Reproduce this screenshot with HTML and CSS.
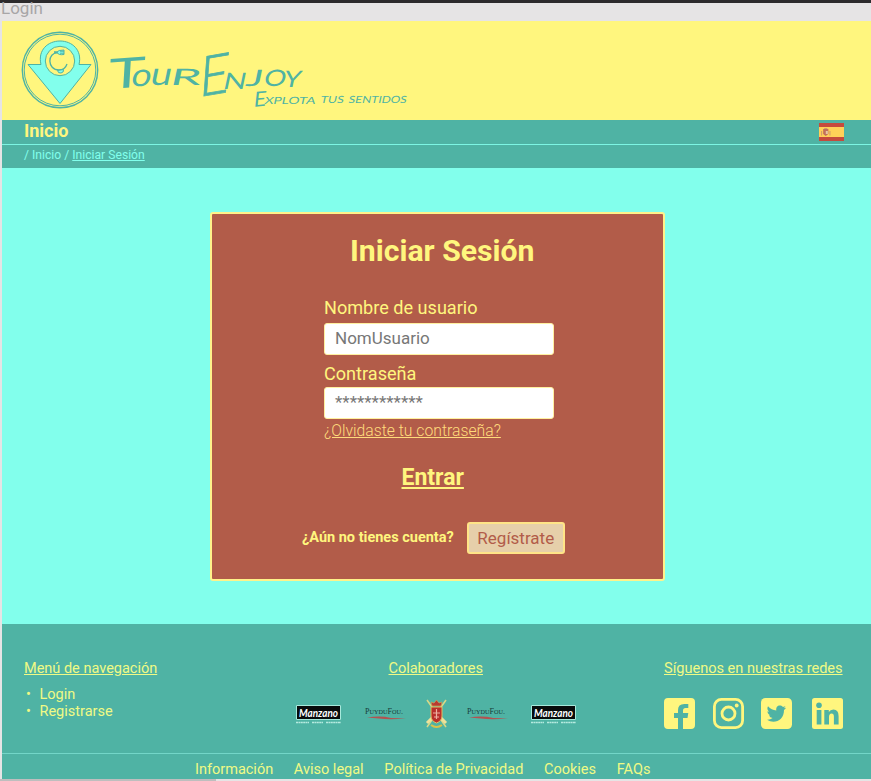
FILE: index.html
```html
<!DOCTYPE html>
<html lang="es">
<head>
<meta charset="utf-8">
<title>TourEnjoy - Iniciar Sesión</title>
<link rel="stylesheet" href="styles.css">
</head>
<body>
<div class="frame-label"><span>Login</span></div>
<div class="page">
  <header class="brand">
    <svg class="logo" viewBox="0 0 78 78" aria-hidden="true">
      <circle cx="39" cy="39" r="37.700" fill="none" stroke="#4fb3a4" stroke-width="1.4"/>
      <circle cx="39" cy="39" r="35.800" fill="none" stroke="#4fb3a4" stroke-width="1"/>
      <path d="M7 33.500H20C16.500 19 27 10 39 10S61.500 19 58 33.500H70L39 72.500Z" fill="#82ffec" stroke="#4fb3a4"/>
      <circle cx="39" cy="30" r="14.700" fill="#fff67e" stroke="#4fb3a4"/>
      <path d="M37 22C26 21 26 39 38 39C42 39 45 36 46 33M37 21H33" fill="none" stroke="#4fb3a4" stroke-width="1.300"/>
      <path d="M36 21Q37 19 43 19V23.500Q37 24.500 36 21ZM39 20.200h4M39 22.200h4M36.500 39.500Q37 42.500 40 42T42.500 38.500Z" fill="#82ffec" stroke="#4fb3a4"/>
    </svg>
    <svg class="wordmark" viewBox="108 40 302 76">
      <g fill="#4fb3a4" stroke="#4fb3a4">
        <text class="hand name" transform="skewX(-12)"><tspan class="cap-t" x="127" y="89" rotate="-6" textLength="36" lengthAdjust="spacingAndGlyphs">T</tspan><tspan class="low" x="148" y="86" textLength="20" lengthAdjust="spacingAndGlyphs">o</tspan><tspan class="low" x="167" y="85" textLength="21" lengthAdjust="spacingAndGlyphs">u</tspan><tspan class="small" x="187" y="85" textLength="31" lengthAdjust="spacingAndGlyphs">r</tspan><tspan class="cap-e" x="219" y="97" rotate="-9" textLength="29" lengthAdjust="spacingAndGlyphs">E</tspan><tspan class="small" x="241" y="89" textLength="23" lengthAdjust="spacingAndGlyphs">n</tspan><tspan class="small" x="263" y="86" textLength="17" lengthAdjust="spacingAndGlyphs">j</tspan><tspan class="small" x="281" y="86" textLength="22" lengthAdjust="spacingAndGlyphs">o</tspan><tspan class="small" x="301" y="87" textLength="17" lengthAdjust="spacingAndGlyphs">y</tspan></text>
        <text class="hand tag" transform="skewX(-12)"><tspan class="tag-e" x="276" y="107" rotate="-6">E</tspan><tspan x="286" y="104" textLength="51" lengthAdjust="spacingAndGlyphs">xplota</tspan> <tspan x="342" y="103" textLength="23" lengthAdjust="spacingAndGlyphs">tus</tspan> <tspan x="370" y="103" textLength="58" lengthAdjust="spacingAndGlyphs">sentidos</tspan></text>
      </g>
    </svg>
  </header>
  <nav class="main-nav">
    <a class="home">Inicio</a>
    <svg class="flag" viewBox="0 0 24 18" preserveAspectRatio="none" aria-hidden="true">
      <path fill="#c54b3d" d="M0 0h24v18H0z"/><path fill="#ffd158" d="M0 4h24v10H0z"/>
      <path fill="#c2705a" d="M4 6h5v5l-2.500 2L4 11z"/><path d="M2.500 8v4.500M10.500 8v4.500M5 5.500h3" stroke="#d09a6c"/><path fill="#e8c7a1" d="M6.500 8h2v3h-2z"/>
    </svg>
  </nav>
  <div class="crumbs">/ Inicio / <a>Iniciar Sesión</a></div>
  <main>
    <section class="card">
      <h1>Iniciar Sesión</h1>
      <form>
        <label for="user">Nombre de usuario</label>
        <div class="field" id="user">NomUsuario</div>
        <label class="second" for="pass">Contraseña</label>
        <div class="field" id="pass">************</div>
        <a class="forgot">¿Olvidaste tu contraseña?</a>
      </form>
      <a class="enter">Entrar</a>
      <div class="signup"><b>¿Aún no tienes cuenta?</b><a class="button">Regístrate</a></div>
    </section>
  </main>
  <footer>
    <div class="columns">
      <section class="menu">
        <h2>Menú de navegación</h2>
        <ul><li>Login</li><li>Registrarse</li></ul>
      </section>
      <section class="partners">
        <h2>Colaboradores</h2>
        <svg class="partner-row" viewBox="296 696 282 34">
          <defs>
            <g id="manzano"><path fill="#080c0c" stroke="#a6eadc" stroke-width="1" d="M.5.500h44v14H.5z"/><text class="manzano-text" x="3" y="12" textLength="39" lengthAdjust="spacingAndGlyphs">Manzano</text><path d="M0 17.500h13M16 17.500h11M30 17.500h15" stroke="#b5eadf" stroke-width="1.300" stroke-dasharray="2 .4"/></g>
            <g id="puy"><text class="puy-text" x="0" y="9" textLength="38" lengthAdjust="spacingAndGlyphs">P<tspan class="puy-small">UYDU</tspan>F<tspan class="puy-small">OU</tspan>.</text><path d="M2 12.500Q16 10.500 26 13L41 13.500Q24 15 14 13.500Z" fill="#b35250"/></g>
          </defs>
          <use href="#manzano" x="296" y="705"/><use href="#puy" x="365" y="705"/>
          <g transform="translate(426 699)"><path d="M1 1L20 28M20 1L1 28" stroke="#d8d887" stroke-width="1.600"/><path d="M1 24l5-5M20 24l-5-5" stroke="#efe29a" stroke-width="3"/><path d="M5 8h11v9q0 5-5.500 7Q5 22 5 17z" fill="#b92f2b" stroke="#e2bd62"/><path d="M6 7L5 3l3 1 2.500-3L13 4l3-1-1 4z" fill="#b83b31" stroke="#d9aa56" stroke-width=".6"/><path d="M7 14h7M10.500 10v10M8 18h5" stroke="#edb0a0" stroke-width="1.200"/><path d="M5 26q5.500 4 11 0" stroke="#d9c349" stroke-width="2" fill="none"/></g>
          <use href="#puy" x="467" y="705"/><use href="#manzano" x="531" y="705"/>
        </svg>
      </section>
      <section class="social">
        <h2>Síguenos en nuestras redes</h2>
        <div class="icons">
          <svg viewBox="0 0 31 31"><path fill="#fff67e" d="M4 0h23a4 4 0 0 1 4 4v23a4 4 0 0 1-4 4h-8V20h4.500l.8-5H19v-2.500q0-2.500 2.500-2.500h2.800V6h-4Q14 6 14 12v3h-4v5h4v11H4a4 4 0 0 1-4-4V4a4 4 0 0 1 4-4Z"/></svg>
          <svg viewBox="0 0 31 31" fill="none" stroke="#fff67e" stroke-width="2.800"><rect x="1.400" y="1.400" width="28.200" height="28.200" rx="7"/><circle cx="15.500" cy="15.500" r="6.500"/><circle cx="23.700" cy="7.500" r="1.900" fill="#fff67e" stroke="none"/></svg>
          <svg viewBox="0 0 31 31"><rect width="31" height="31" rx="4.500" fill="#fff67e"/><path fill="#4fb3a4" d="M25 9.700l-2.300.6q1.300-.9 1.700-2.100l-2.400.9C18.800 5.900 14.500 8.300 15.300 12.500Q10.500 12.200 7 8.300c-1.200 2-.6 4.200 1.200 5.500l-1.700-.5q0 3.200 3.100 4H7.900q1 2.500 3.700 2.800Q9.200 22 6 21.800c7.700 4.700 17.200.2 17-9.900Q24.300 11 25 9.700Z"/></svg>
          <svg viewBox="0 0 31 31"><rect width="31" height="31" rx="2.500" fill="#fff67e"/><circle cx="7" cy="7.200" r="2.800" fill="#4fb3a4"/><path fill="#4fb3a4" d="M4.700 12h4.700v14.500H4.700zM12.300 12h4.500v2q1.500-2.500 4.600-2.500 5.200 0 5.200 6.500v8.500h-4.700v-8q0-3-2.300-3-2.600 0-2.600 3.500v7.500h-4.700z"/></svg>
        </div>
      </section>
    </div>
    <div class="legal"><a>Información</a><a>Aviso legal</a><a>Política de Privacidad</a><a>Cookies</a><a>FAQs</a></div>
  </footer>
</div>
<div class="scroll"></div>
</body>
</html>
```
FILE: styles.css
```css
* { box-sizing: border-box; }
body { margin: 0; width: 871px; height: 781px; overflow: hidden; background: #e6e4e5; font-family: Roboto, sans-serif; color: #fff67e; }
h1, h2, ul { margin: 0; padding: 0; font-weight: 400; }
.frame-label { height: 21px; border-top: 3px solid #2c2a2c; padding-left: 1px; color: #a8a6a7; font-size: 17px; line-height: 20px; }
.frame-label span { display: block; margin-top: -5px; }
.page { margin-left: 2px; height: 758px; display: flex; flex-direction: column; background: #82ffec; }
.brand { height: 99px; background: #fff67e; display: flex; }
.logo { width: 78px; height: 78px; margin: 10px 0 0 19px; }
.wordmark { width: 302px; height: 76px; margin: 19px 0 0 9px; overflow: visible; }
.hand { font-family: Lato, sans-serif; font-weight: 400; }
.name { stroke-width: 0; }
.cap-t { font-size: 42px; }
.low { font-size: 32px; }
.small { font-size: 32px; font-variant: small-caps; }
.cap-e { font-size: 57px; font-weight: 300; stroke-width: .8px; }
.tag { font-size: 14px; font-variant: small-caps; stroke-width: 0; }
.tag-e { font-size: 21px; }
.main-nav { height: 24px; padding: 0 27px 0 22px; display: flex; align-items: center; justify-content: space-between; background: #4fb3a4; }
.home { font-size: 18px; line-height: 22px; font-weight: 700; margin-top: -2px; }
.flag { width: 25px; height: 18px; }
.crumbs { height: 24px; border-top: 1px solid #7df5e3; padding-left: 22px; background: #4fb3a4; color: #82ffec; font-size: 12.150px; line-height: 21px; }
.crumbs a { text-decoration: underline; }
main { height: 457px; padding: 44px 0 0 208px; }
.card { width: 455px; height: 369px; border: 2px solid #fff28a; border-radius: 3px; background: #b25c49; display: flex; flex-direction: column; }
h1 { font-size: 30.200px; line-height: 36px; font-weight: 700; margin: 19px 0 0 138px; }
form { margin: 28px 0 0 112px; width: 230px; }
label { display: block; font-size: 18.100px; line-height: 22px; height: 26px; }
.second { margin-top: 8px; height: 24px; }
.field { height: 32px; border: 1px solid #fff0a0; border-radius: 3px; background: #fff; color: #777; padding-left: 10px; font-size: 17px; line-height: 29px; }
.forgot { display: block; font-size: 15.750px; line-height: 20px; font-weight: 300; text-decoration: underline; margin-top: 2px; white-space: nowrap; color: #ffdb7b; }
.enter { font-size: 23px; line-height: 28px; font-weight: 700; text-decoration: underline; margin: 23px 0 0 189.500px; }
.signup { display: flex; align-items: center; margin: 30px 0 0 90px; font-size: 14.500px; line-height: 17px; white-space: nowrap; }
.signup b { margin-top: -1px; }
.button { margin-left: 13px; width: 98px; height: 32px; border: 2px solid #ffe487; border-radius: 3px; background: #e6cfaa; color: #b25c49; text-align: center; font-size: 17px; line-height: 29px; }
footer { height: 155px; background: #4fb3a4; color: #f0fa85; font-size: 14.500px; }
.columns { height: 129px; padding: 34px 28px 0 22px; display: flex; }
h2 { font-size: 14.500px; line-height: 21px; text-decoration: underline; white-space: nowrap; }
.menu { width: 134px; }
.menu ul { list-style: none; padding-left: 2px; margin-top: 7px; line-height: 17px; }
.menu li::before { content: "•"; display: inline-block; width: 13.500px; }
.partners { width: 282px; margin-left: 138px; }
.partners h2 { margin-left: 92.500px; }
.partner-row { display: block; width: 282px; height: 34px; margin-top: 17px; }
.manzano-text { font-family: Lato, sans-serif; font-size: 12px; font-style: italic; font-weight: 700; fill: #fff; }
.puy-text { font-family: "Liberation Serif", serif; font-size: 9px; fill: #163d39; }
.puy-small { font-size: 7px; }
.social { width: 179px; margin-left: auto; }
.social h2 { font-size: 14.560px; }
.icons { display: flex; margin-top: 19px; }
.icons svg { flex: none; width: 31px; height: 31px; margin-right: 17.500px; }
.icons svg:nth-child(3) { margin-right: 20px; }
.icons svg:last-child { margin-right: 0; }
.legal { height: 26px; border-top: 1px solid #73d6c8; padding-left: 193px; display: flex; line-height: 32px; white-space: nowrap; }
.legal a { margin-right: 20.700px; }
.scroll { width: 216px; height: 2px; background: #bebebe; }
```
